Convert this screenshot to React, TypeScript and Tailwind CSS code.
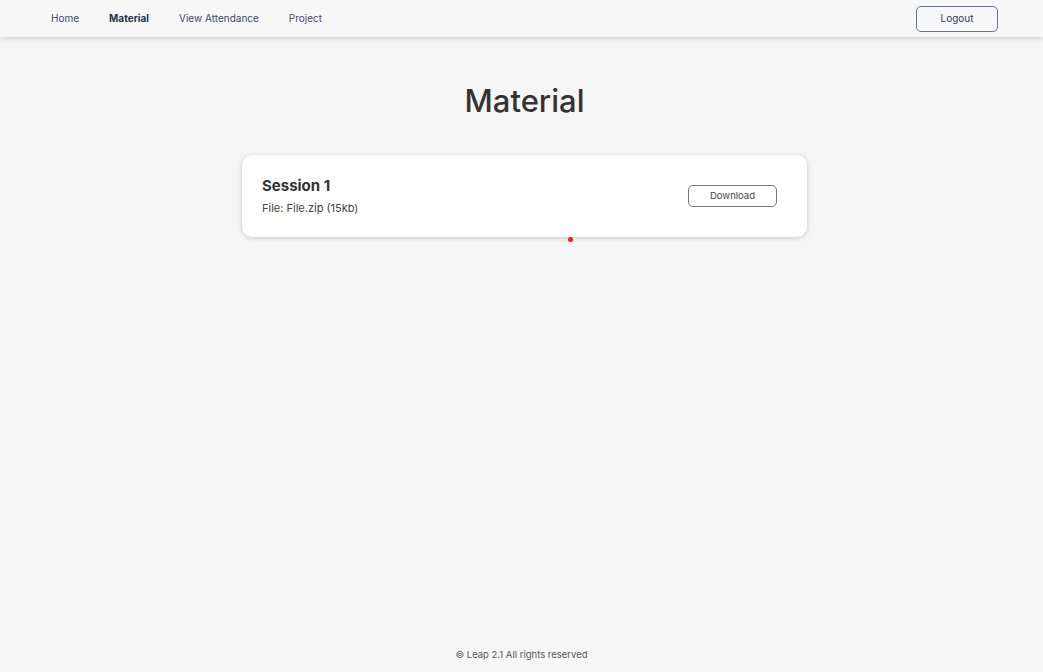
import React from 'react'

const links = [
  { label: 'Home', active: false },
  { label: 'Material', active: true },
  { label: 'View Attendance', active: false },
  { label: 'Project', active: false },
]

export default function App() {
  return (
    <div
      className="min-h-screen flex flex-col bg-[#f6f6f6] text-[#333]"
      style={{ fontFamily: 'Inter, "Noto Sans", sans-serif' }}
    >
      {/* Navbar */}
      <nav className="h-[37px] flex items-center justify-between bg-[#f7f7f7] pl-[51px] pr-[45px] shadow-[0_2px_5px_rgba(0,0,0,0.15)]">
        <ul className="flex items-center gap-[30px] text-[10px]">
          {links.map((l) => (
            <li
              key={l.label}
              className={l.active ? 'font-bold text-[#283050]' : 'text-[#404868]'}
            >
              {l.label}
            </li>
          ))}
        </ul>
        <button className="w-[82px] h-[26px] rounded-[5px] border border-[#6a6f9a] text-[10px] text-[#303858] bg-[#f7f7f7]">
          Logout
        </button>
      </nav>

      {/* Content */}
      <main className="flex-1 flex flex-col items-center pl-[6px]">
        <h1 className="mt-[45px] text-[31px] leading-[38px] font-medium text-[#333]">
          Material
        </h1>

        <div className="relative mt-[35px] w-[565px] h-[82px] bg-white rounded-[10px] shadow-[0_1px_5px_rgba(0,0,0,0.2)] flex items-center justify-between pl-[20px] pr-[30px]">
          <div className="flex flex-col">
            <h2 className="text-[15px] leading-[20px] font-bold text-[#333]">Session 1</h2>
            <p className="mt-[4px] text-[11px] text-[#444]">File: File.zip (15kb)</p>
          </div>
          <button className="w-[89px] h-[22px] rounded-[5px] border border-[#777] text-[9.5px] text-[#444] bg-white">
            Download
          </button>
          <span className="absolute left-[326px] -bottom-[5px] w-[5px] h-[5px] rounded-full bg-[#ee1c1c]" />
        </div>
      </main>

      {/* Footer */}
      <footer className="pb-[10px] text-center text-[9.5px] text-[#555]">
        © Leap 2.1 All rights reserved
      </footer>
    </div>
  )
}
